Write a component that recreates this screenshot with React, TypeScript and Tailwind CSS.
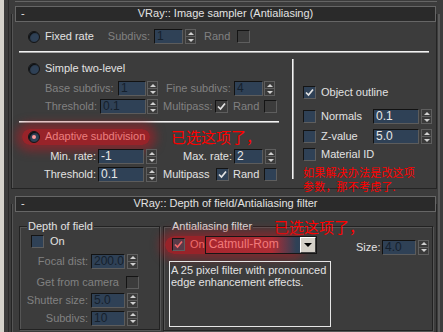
import React from 'react'

const Field = ({ w, value, dim }: { w: string; value: string; dim?: boolean }) => (
  <div
    className={`${w} h-[15px] shrink-0 border border-[#121212] border-b-[#5c5c5c] border-r-[#5c5c5c] bg-[#2f4156] pl-[2px] text-[12px] leading-[13px] ${dim ? 'text-[#15202c]' : 'text-[#e8e8e8]'}`}
  >
    {value}
  </div>
)

const Spinner = () => (
  <div className="flex h-[15px] w-[11px] shrink-0 flex-col border border-[#5e5e5e] bg-[#3a3a3a]">
    <div className="flex flex-1 items-center justify-center border-b border-[#5e5e5e]">
      <div className="border-x-[3px] border-b-[3px] border-x-transparent border-b-[#d0d0d0]" />
    </div>
    <div className="flex flex-1 items-center justify-center">
      <div className="border-x-[3px] border-t-[3px] border-x-transparent border-t-[#d0d0d0]" />
    </div>
  </div>
)

const Check = ({ checked, dim, red }: { checked?: boolean; dim?: boolean; red?: boolean }) => (
  <div
    className={`flex h-[13px] w-[13px] shrink-0 items-center justify-center border border-[#141414] border-b-[#5e5e5e] border-r-[#5e5e5e] ${dim ? 'bg-[#3c3c3c]' : red ? 'bg-[#5a3a48]' : 'bg-[#2f4156]'}`}
  >
    {checked && (
      <svg width="9" height="9" viewBox="0 0 9 9">
        <path d="M1 4.5 L3.5 7 L8 1.5" stroke={red ? '#f06a6a' : '#e4e4e4'} strokeWidth="1.7" fill="none" />
      </svg>
    )}
  </div>
)

const Radio = ({ on }: { on?: boolean }) => (
  <div className="flex h-[12px] w-[12px] shrink-0 items-center justify-center rounded-full border border-[#141414] bg-[#2f4156] shadow-[inset_1px_1px_1px_#0c0c0c]">
    {on && <div className="h-[4px] w-[4px] rounded-full bg-[#ff9a9a]" />}
  </div>
)

const Header = ({ title }: { title: string }) => (
  <div className="-mt-[8px] ml-[3px] flex h-[16px] w-[421px] items-center border border-[#666666] bg-[#2a2a2a] text-[#e2e2e2]">
    <span className="ml-[5px] w-[10px]">-</span>
    <span className="flex-1 pr-[15px] text-center">{title}</span>
  </div>
)

const HLine = ({ className }: { className: string }) => (
  <div className={`h-[2px] border-t border-b border-t-[#f2f2f2] border-b-[#a8a8a8] ${className}`} />
)

const GroupTitle = ({ children }: { children: React.ReactNode }) => (
  <div className="-mt-[7px] flex h-[13px] items-center">{children}</div>
)

export default function App() {
  const dim = 'text-[#818181]'
  const on = 'text-[#e2e2e2]'
  return (
    <div className="flex h-[332px] w-[443px] overflow-hidden bg-[#3c3c3c] font-['Liberation_Sans',Arial,sans-serif] text-[11px] leading-[13px]">
      <div className="w-[4px] shrink-0 bg-[#d6d3cc]" />
      <div className="w-[4px] shrink-0" />
      <div className="w-[1px] shrink-0 bg-[#2a2a2a]" />
      <div className="w-[2px] shrink-0" />

      <div className="flex w-[426px] shrink-0 flex-col">
        <div className="ml-[4px] h-[2px] w-[422px] border-b border-[#656565]" />

        {/* rollout: image sampler */}
        <div className="mt-[12px] h-[175px] border-x border-b border-[#242424] shadow-[inset_1px_0_0_#555555]">
          <Header title="VRay:: Image sampler (Antialiasing)" />

          <div className="mt-[7px] flex h-[16px] items-center">
            <div className="ml-[16px]"><Radio /></div>
            <span className={`ml-[5px] w-[60px] whitespace-nowrap ${on}`}>Fixed rate</span>
            <span className={`w-[45px] text-right ${dim}`}>Subdivs:</span>
            <div className="ml-[4px]"><Field w="w-[29px]" value="1" dim /></div>
            <div className="ml-[2px]"><Spinner /></div>
            <span className={`ml-[8px] w-[33px] ${dim}`}>Rand</span>
            <Check dim />
          </div>

          <HLine className="ml-[7px] mt-[6px] w-[410px]" />

          <div className="flex items-start">
            <div className="flex w-[280px] shrink-0 flex-col">
              <div className="mt-[8px] flex h-[16px] items-center">
                <div className="ml-[16px]"><Radio /></div>
                <span className={`ml-[5px] whitespace-nowrap ${on}`}>Simple two-level</span>
              </div>
              <div className="mt-[4px] flex h-[16px] items-center">
                <span className={`ml-[33px] w-[73px] whitespace-nowrap ${dim}`}>Base subdivs:</span>
                <Field w="w-[28px]" value="1" dim />
                <div className="ml-[1px]"><Spinner /></div>
                <span className={`ml-[8px] w-[68px] whitespace-nowrap ${dim}`}>Fine subdivs:</span>
                <Field w="w-[29px]" value="4" dim />
                <div className="ml-[1px]"><Spinner /></div>
              </div>
              <div className="mt-[2px] flex h-[16px] items-center">
                <span className={`ml-[33px] w-[55px] whitespace-nowrap ${dim}`}>Threshold:</span>
                <Field w="w-[46px]" value="0.1" dim />
                <div className="ml-[1px]"><Spinner /></div>
                <span className={`ml-[5px] w-[52px] whitespace-nowrap ${dim}`}>Multipass:</span>
                <Check checked dim />
                <span className={`ml-[5px] w-[31px] ${dim}`}>Rand</span>
                <Check dim />
              </div>

              <HLine className="ml-[7px] mt-[6px] w-[260px]" />

              <div className="mt-[6px] flex h-[16px] items-center">
                <div className="ml-[10px] flex h-[16px] items-center rounded-full bg-[rgba(168,30,38,0.85)] pl-[6px] pr-[5px] shadow-[0_0_10px_6px_rgba(168,30,38,0.6)]">
                  <Radio on />
                  <span className="ml-[5px] w-[100px] whitespace-nowrap text-[#ec7f7f]">Adaptive subdivision</span>
                </div>
                <span className="ml-[21px] whitespace-nowrap font-['Noto_Sans_CJK_SC',sans-serif] text-[15px] leading-[13px] text-[#ff0000]">已选这项了，</span>
              </div>
              <div className="mt-[4px] flex h-[16px] items-center">
                <span className={`ml-[28px] w-[56px] whitespace-nowrap text-right ${on}`}>Min. rate:</span>
                <div className="ml-[2px]"><Field w="w-[46px]" value="-1" /></div>
                <div className="ml-[2px]"><Spinner /></div>
                <span className={`w-[75px] whitespace-nowrap text-right ${on}`}>Max. rate:</span>
                <div className="ml-[2px]"><Field w="w-[29px]" value="2" /></div>
                <div className="ml-[2px]"><Spinner /></div>
              </div>
              <div className="mt-[2px] flex h-[16px] items-center">
                <span className={`ml-[28px] w-[56px] whitespace-nowrap text-right ${on}`}>Threshold:</span>
                <div className="ml-[2px]"><Field w="w-[46px]" value="0.1" /></div>
                <div className="ml-[2px]"><Spinner /></div>
                <span className={`ml-[6px] w-[53px] whitespace-nowrap ${on}`}>Multipass</span>
                <Check checked />
                <span className={`ml-[4px] w-[31px] ${on}`}>Rand</span>
                <Check />
              </div>
            </div>

            <div className="mt-[6px] h-[120px] w-[2px] shrink-0 border-l border-r border-l-[#f2f2f2] border-r-[#a8a8a8]" />

            <div className="flex flex-col pl-[9px]">
              <div className="mt-[32px] flex h-[16px] items-center">
                <Check checked />
                <span className={`ml-[5px] whitespace-nowrap ${on}`}>Object outline</span>
              </div>
              <div className="mt-[8px] flex h-[16px] items-center">
                <Check />
                <span className={`ml-[5px] w-[52px] ${on}`}>Normals</span>
                <Field w="w-[46px]" value="0.1" />
                <div className="ml-[2px]"><Spinner /></div>
              </div>
              <div className="mt-[4px] flex h-[16px] items-center">
                <Check />
                <span className={`ml-[5px] w-[52px] ${on}`}>Z-value</span>
                <Field w="w-[46px]" value="5.0" />
                <div className="ml-[2px]"><Spinner /></div>
              </div>
              <div className="mt-[2px] flex h-[16px] items-center">
                <Check />
                <span className={`ml-[5px] whitespace-nowrap ${on}`}>Material ID</span>
              </div>
              <div className="mt-[2px] w-[125px] font-['Noto_Sans_CJK_SC',sans-serif] text-[11px] leading-[14px] tracking-[0.2px] text-[#ff0000]">
                <div className="whitespace-nowrap">如果解决办法是改这项</div>
                <div className="whitespace-nowrap">参数，那不考虑了.</div>
              </div>
            </div>
          </div>
        </div>

        {/* rollout: depth of field / antialiasing filter */}
        <div className="mt-[15px] h-[140px] border-x border-[#242424] shadow-[inset_1px_0_0_#555555]">
          <Header title="VRay:: Depth of field/Antialiasing filter" />

          <div className="mt-[14px] flex">
            <div className="ml-[7px] flex h-[104px] w-[141px] shrink-0 flex-col border border-[#222222] shadow-[inset_1px_1px_0_#555555,1px_1px_0_#555555]">
              <GroupTitle>
                <span className={`ml-[7px] bg-[#3c3c3c] px-[1px] ${on}`}>Depth of field</span>
              </GroupTitle>
              <div className="mt-[2px] flex h-[14px] items-center">
                <div className="ml-[11px]"><Check /></div>
                <span className={`ml-[6px] ${on}`}>On</span>
              </div>
              <div className="mt-[5px] flex h-[15px] items-center">
                <span className={`w-[68px] whitespace-nowrap text-right ${dim}`}>Focal dist:</span>
                <div className="ml-[3px]"><Field w="w-[34px]" value="200.0" dim /></div>
                <div className="ml-[2px]"><Spinner /></div>
              </div>
              <div className="mt-[7px] flex h-[14px] items-center">
                <span className={`w-[99px] whitespace-nowrap text-right ${dim}`}>Get from camera</span>
                <div className="ml-[7px]"><Check dim /></div>
              </div>
              <div className="mt-[3px] flex h-[15px] items-center">
                <span className={`w-[68px] whitespace-nowrap text-right ${dim}`}>Shutter size:</span>
                <div className="ml-[3px]"><Field w="w-[34px]" value="5.0" dim /></div>
                <div className="ml-[2px]"><Spinner /></div>
              </div>
              <div className="mt-[3px] flex h-[15px] items-center">
                <span className={`w-[68px] whitespace-nowrap text-right ${dim}`}>Subdivs:</span>
                <div className="ml-[3px]"><Field w="w-[34px]" value="10" dim /></div>
                <div className="ml-[2px]"><Spinner /></div>
              </div>
            </div>

            <div className="ml-[3px] flex h-[105px] w-[270px] shrink-0 flex-col border border-[#222222] shadow-[inset_1px_1px_0_#555555,1px_1px_0_#555555]">
              <GroupTitle>
                <span className={`ml-[7px] whitespace-nowrap bg-[#3c3c3c] px-[1px] ${on}`}>Antialiasing filter</span>
                <span className="ml-[21px] whitespace-nowrap font-['Noto_Sans_CJK_SC',sans-serif] text-[15px] leading-[13px] text-[#ff0000]">已选这项了，</span>
              </GroupTitle>
              <div className="mt-[3px] flex h-[18px] items-start">
                <div className="ml-[1px] flex h-[18px] w-[135px] shrink-0 items-center rounded-full bg-[rgba(168,30,38,0.85)] pl-[7px] shadow-[0_0_10px_5px_rgba(168,30,38,0.6)]">
                  <Check checked red />
                  <span className="ml-[5px] w-[28px] text-[#ee6c6c]">On</span>
                  <div className="flex h-[18px] w-[112px] shrink-0 items-center border border-[#161616] bg-[linear-gradient(90deg,#a8262e_0%,#ad2c34_60%,#2f4156_82%)] pl-[3px]">
                    <span className="flex-1 whitespace-nowrap text-[12px] text-[#f27a7a]">Catmull-Rom</span>
                    <div className="flex h-[16px] w-[16px] items-center justify-center border border-[#ffffff] border-b-[#404040] border-r-[#404040] bg-[#d4d0c8]">
                      <div className="border-x-[4px] border-t-[4px] border-x-transparent border-t-[#000000]" />
                    </div>
                  </div>
                </div>
                <div className="ml-[56px] mt-[4px] flex items-center">
                  <span className={`w-[26px] ${on}`}>Size:</span>
                  <Field w="w-[34px]" value="4.0" dim />
                  <div className="ml-[2px]"><Spinner /></div>
                </div>
              </div>
              <div className="ml-[5px] mt-[7px] h-[66px] w-[162px] border border-[#e6e6e6] pl-[1px] pt-[2px] text-[#e2e2e2] leading-[12px]">
                <div className="whitespace-nowrap">A 25 pixel filter with pronounced</div>
                <div className="whitespace-nowrap">edge enhancement effects.</div>
              </div>
            </div>
          </div>
        </div>
      </div>

      <div className="w-[1px] shrink-0" />
      <div className="mt-[14px] w-[2px] shrink-0 bg-[#5a5a5a]" />
    </div>
  )
}
